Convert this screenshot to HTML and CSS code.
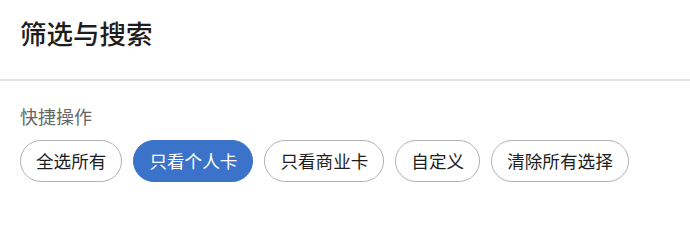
FILE: index.html
```html
<!DOCTYPE html>
<html lang="zh">
<head>
<meta charset="utf-8">
<link rel="stylesheet" href="styles.css">
</head>
<body>
<div class="panel">
  <header class="panel-header">
    <h1 class="title">筛选与搜索</h1>
  </header>
  <section class="quick">
    <div class="label">快捷操作</div>
    <div class="chips">
      <button class="chip">全选所有</button>
      <button class="chip active">只看个人卡</button>
      <button class="chip">只看商业卡</button>
      <button class="chip">自定义</button>
      <button class="chip">清除所有选择</button>
    </div>
  </section>
</div>
</body>
</html>
```

FILE: styles.css
```css
html, body {
  margin: 0;
  padding: 0;
  background: #ffffff;
}
body {
  font-family: "Noto Sans CJK SC", "Noto Sans", sans-serif;
  color: #1f1f1f;
}
.panel {
  width: 690px;
}
.panel-header {
  padding: 15px 20px 28px;
  border-bottom: 2px solid #e2e2e2;
}
.title {
  margin: 0;
  font-size: 26.5px;
  line-height: 36px;
  font-weight: 500;
  color: #1e1e1e;
}
.quick {
  padding: 23px 20px 0;
}
.label {
  font-size: 18px;
  line-height: 24px;
  color: #666666;
  margin-bottom: 12px;
}
.chips {
  display: flex;
  gap: 11px;
}
.chip {
  height: 42px;
  padding: 0 15px;
  border: 1px solid #b3b3b3;
  border-radius: 21px;
  background: #ffffff;
  color: #1e1e1e;
  font-family: "Noto Sans CJK SC", "Noto Sans", sans-serif;
  font-size: 17.6px;
  line-height: 40px;
  cursor: pointer;
}
.chip.active {
  background: #3a73c9;
  border-color: #3a73c9;
  color: #ffffff;
}
```
